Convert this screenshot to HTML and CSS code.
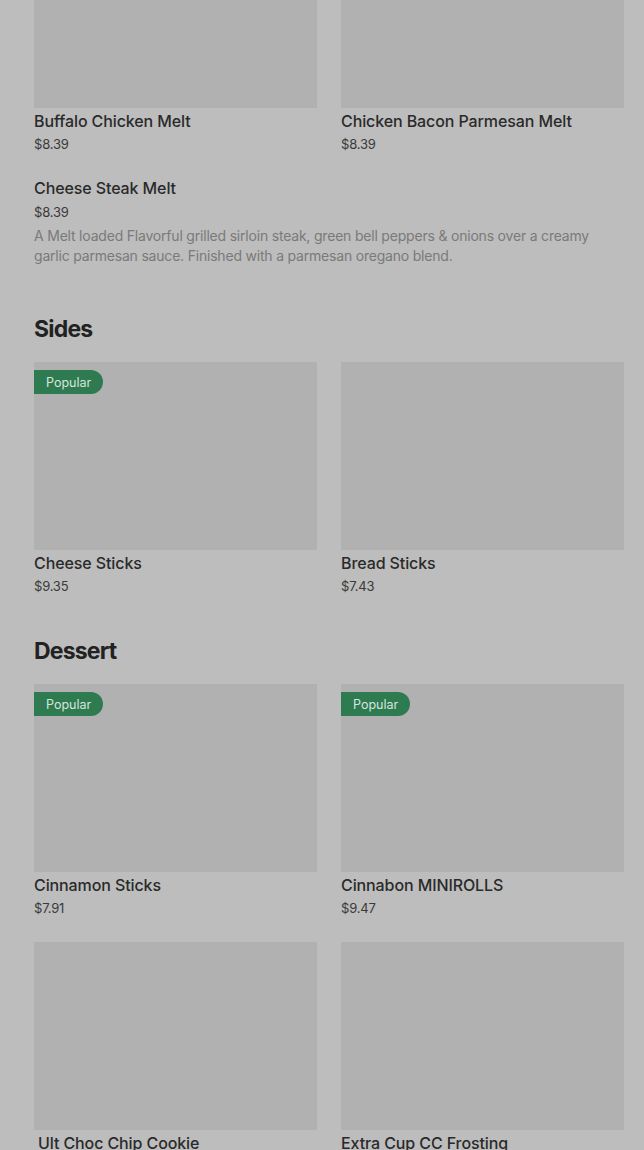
FILE: index.html
```html
<!DOCTYPE html>
<html lang="en">
<head>
<meta charset="utf-8">
<title>Menu</title>
<link rel="stylesheet" href="styles.css">
</head>
<body>
<main class="menu">
  <section class="section first">
    <div class="grid">
      <div class="item">
        <div class="thumb"></div>
        <div class="name">Buffalo Chicken Melt</div>
        <div class="price">$8.39</div>
      </div>
      <div class="item">
        <div class="thumb"></div>
        <div class="name">Chicken Bacon Parmesan Melt</div>
        <div class="price">$8.39</div>
      </div>
      <div class="item text-only">
        <div class="name">Cheese Steak Melt</div>
        <div class="price">$8.39</div>
        <p class="desc">A Melt loaded Flavorful grilled sirloin steak, green bell peppers &amp; onions over a creamy garlic parmesan sauce. Finished with a parmesan oregano blend.</p>
      </div>
    </div>
  </section>

  <section class="section">
    <h2 class="heading">Sides</h2>
    <div class="grid">
      <div class="item">
        <div class="thumb"><span class="badge">Popular</span></div>
        <div class="name">Cheese Sticks</div>
        <div class="price">$9.35</div>
      </div>
      <div class="item">
        <div class="thumb"></div>
        <div class="name">Bread Sticks</div>
        <div class="price">$7.43</div>
      </div>
    </div>
  </section>

  <section class="section">
    <h2 class="heading">Dessert</h2>
    <div class="grid">
      <div class="item">
        <div class="thumb"><span class="badge">Popular</span></div>
        <div class="name">Cinnamon Sticks</div>
        <div class="price">$7.91</div>
      </div>
      <div class="item">
        <div class="thumb"><span class="badge">Popular</span></div>
        <div class="name">Cinnabon MINIROLLS</div>
        <div class="price">$9.47</div>
      </div>
      <div class="item">
        <div class="thumb"></div>
        <div class="name indent">Ult Choc Chip Cookie</div>
      </div>
      <div class="item">
        <div class="thumb"></div>
        <div class="name">Extra Cup CC Frosting</div>
      </div>
    </div>
  </section>
</main>
</body>
</html>
```

FILE: styles.css
```css
* { box-sizing: border-box; }
html, body {
  margin: 0;
  padding: 0;
  background: #bdbdbd;
  overflow: hidden;
}
body {
  font-family: "Inter", "Liberation Sans", sans-serif;
  color: #262626;
}
.menu {
  padding: 0 20px 0 34px;
  margin-top: -80px;
}
.section {
  padding-top: 39px;
}
.section.first {
  padding-top: 0;
}
.heading {
  margin: 0 0 17px;
  font-size: 23px;
  line-height: 32px;
  font-weight: 700;
  letter-spacing: -0.8px;
  color: #222;
}
.grid {
  display: grid;
  grid-template-columns: 1fr 1fr;
  column-gap: 24px;
  row-gap: 24px;
}
.item { min-width: 0; }
.thumb {
  position: relative;
  height: 188px;
  background: #b1b1b1;
}
.badge {
  position: absolute;
  top: 8px;
  left: 0;
  height: 24px;
  padding: 0 12px;
  display: flex;
  align-items: center;
  font-size: 12.5px;
  color: #d6e6dc;
  background: #2f7b51;
  border-radius: 0 12px 12px 0;
}
.name {
  margin-top: 1px;
  font-size: 16px;
  line-height: 24px;
  font-weight: 500;
  letter-spacing: -0.1px;
  color: #2a2a2a;
  white-space: nowrap;
}
.name.indent { padding-left: 4px; }
.price {
  padding-top: 1px;
  font-size: 13px;
  line-height: 20px;
  letter-spacing: -0.2px;
  color: #3a3a3a;
}
.text-only {
  grid-column: 1 / -1;
}
.text-only .name {
  margin-top: 0;
  line-height: 20px;
}
.text-only .price {
  margin-top: 4px;
  padding-top: 0;
}
.desc {
  margin: 4px 0 8px;
  padding-right: 20px;
  font-size: 14px;
  line-height: 20px;
  letter-spacing: -0.2px;
  color: #7a7a7a;
}
```
